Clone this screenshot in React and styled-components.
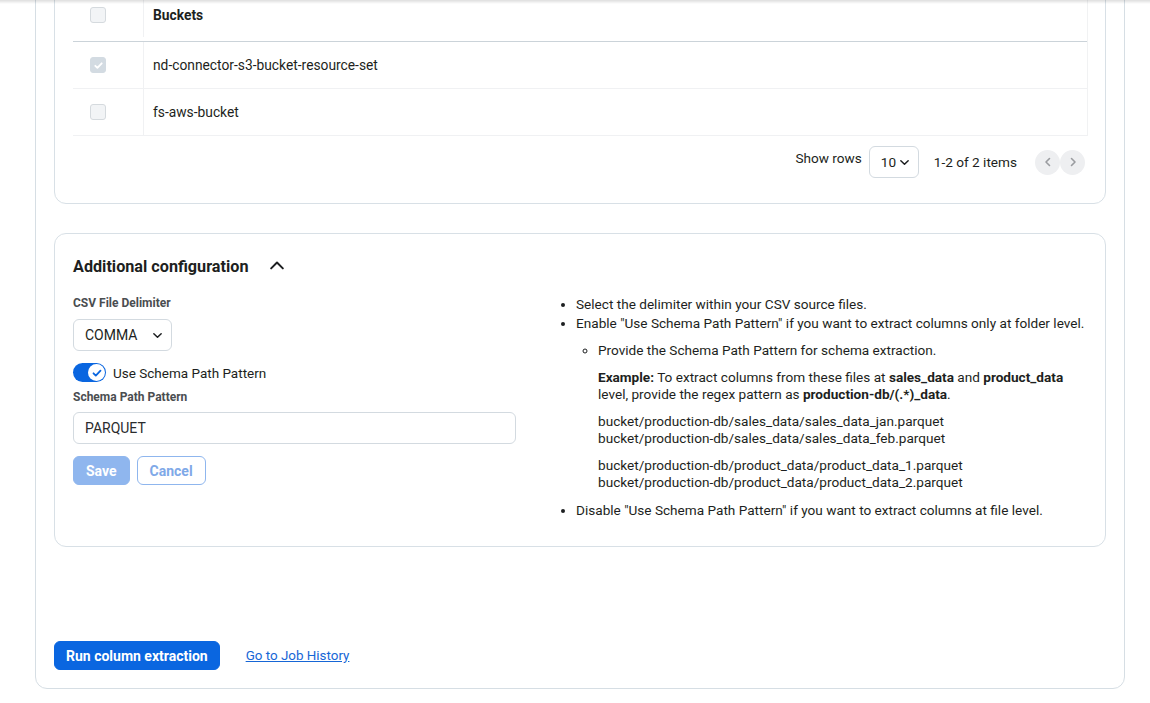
import React from "react";
import styled, { createGlobalStyle } from "styled-components";

const Global = createGlobalStyle`
  html, body { margin: 0; padding: 0; background: #fff; }
  body { font-family: Roboto, "Liberation Sans", Arial, sans-serif; color: #1d1f21; overflow: hidden; }
  * { box-sizing: border-box; }
`;

const TopShadow = styled.div`
  position: fixed;
  top: 0; left: 0; right: 0;
  height: 4px;
  background: linear-gradient(rgba(0,0,0,0.13), rgba(0,0,0,0));
  z-index: 5;
`;

const Page = styled.div`
  height: 703px;
  overflow: hidden;
  padding: 0 25px 0 35px;
`;

const OuterCard = styled.div`
  margin-top: -45px;
  border: 1px solid #d6dee4;
  border-radius: 12px;
  padding: 18px;
  display: flex;
  flex-direction: column;
`;

const Card = styled.section`
  border: 1px solid #d8e0e6;
  border-radius: 12px;
  padding: ${p => p.$pad || "18px"};
  margin-bottom: ${p => p.$mb || "0"};
`;

const Table = styled.div`
  display: flex;
  flex-direction: column;
  border-right: 1px solid #f1f2f3;
`;

const Row = styled.div`
  display: grid;
  grid-template-columns: 71px 1fr;
  height: ${p => (p.$head ? "49px" : "47px")};
  padding-bottom: ${p => (p.$head ? "4px" : "0")};
  border-bottom: 1px solid ${p => (p.$head ? "#cbd3d9" : "#f0f1f3")};
`;

const CheckCell = styled.div`
  display: flex;
  align-items: center;
  padding-left: 17px;
  border-right: 1px solid #f0f1f3;
`;

const TextCell = styled.div`
  display: flex;
  align-items: center;
  padding-left: 9px;
  font-size: 13.8px;
  font-weight: ${p => (p.$head ? 700 : 400)};
  color: #1d1f21;
`;

const Box = styled.span`
  width: 16px;
  height: 16px;
  border-radius: 3px;
  border: 1.5px solid ${p => (p.$checked ? "#d3dbe2" : "#d5dade")};
  background: ${p => (p.$checked ? "#d3dbe2" : "#f2f4f6")};
  display: flex;
  align-items: center;
  justify-content: center;
`;

const Pager = styled.div`
  display: flex;
  justify-content: flex-end;
  align-items: center;
  margin-top: 10px;
  margin-right: 3px;
  font-size: 13.6px;
  color: #1d1f21;
`;

const PagerLabel = styled.span`
  margin-right: 7px;
  margin-top: -8px;
`;

const SelectBox = styled.div`
  display: flex;
  align-items: center;
  justify-content: space-between;
  height: 32px;
  width: ${p => p.$w};
  padding: 0 8px 0 ${p => p.$pl || "11px"};
  border: 1px solid #d3dae0;
  border-radius: 6px;
  font-size: ${p => p.$fs || "13.6px"};
  color: #1d1f21;
  background: #fff;
`;

const PageInfo = styled.span`
  margin-left: 15px;
  margin-right: 18px;
`;

const RoundBtn = styled.span`
  width: 25px;
  height: 25px;
  border-radius: 50%;
  background: #eeeff1;
  display: flex;
  align-items: center;
  justify-content: center;
`;

const CardHead = styled.div`
  display: flex;
  align-items: center;
  gap: 22px;
  height: 22px;
  font-size: 16.2px;
  font-weight: 700;
  color: #1d1f21;
`;

const ConfigGrid = styled.div`
  display: grid;
  grid-template-columns: 475px 1fr;
  margin-top: 19px;
`;

const LeftCol = styled.div`
  display: flex;
  flex-direction: column;
  align-items: flex-start;
`;

const FieldLabel = styled.div`
  font-size: 12px;
  font-weight: 700;
  color: #4a4d50;
  line-height: 14px;
  margin-bottom: ${p => p.$mb || "8px"};
`;

const ToggleRow = styled.label`
  display: flex;
  align-items: center;
  gap: 7px;
  margin: 12px 0 8px;
  font-size: 13.5px;
  color: #1d1f21;
`;

const Toggle = styled.span`
  position: relative;
  width: 33px;
  height: 19px;
  border-radius: 10px;
  background: #0a66e0;
`;

const Knob = styled.span`
  position: absolute;
  right: 1px;
  top: 1px;
  width: 17px;
  height: 17px;
  border-radius: 50%;
  background: #fff;
  display: flex;
  align-items: center;
  justify-content: center;
`;

const TextInput = styled.div`
  width: 443px;
  height: 32px;
  border: 1px solid #d3dae0;
  border-radius: 6px;
  display: flex;
  align-items: center;
  padding-left: 11px;
  font-size: 14px;
  color: #2a2c2e;
`;

const BtnRow = styled.div`
  display: flex;
  gap: 7px;
  margin-top: 12px;
`;

const Button = styled.button`
  font-family: inherit;
  height: 29px;
  padding: 0 ${p => p.$px || "12px"};
  border-radius: 6px;
  font-size: 14px;
  font-weight: 700;
  cursor: pointer;
  border: 1px solid ${p => (p.$variant === "outline" || p.$variant === "disabled" ? "#8fb6ee" : "#0a66e0")};
  background: ${p => (p.$variant === "outline" ? "#fff" : p.$variant === "disabled" ? "#8fb6ee" : "#0a66e0")};
  color: ${p => (p.$variant === "outline" ? "#7fa9e8" : "#fff")};
`;

const HelpList = styled.ul`
  margin: 0;
  padding-left: 28px;
  font-size: 13.6px;
  line-height: 17px;
  color: #1d1f21;
  & > li { margin-bottom: 2px; }
  & > li:last-child { margin-top: 11px; }
`;

const SubList = styled.ul`
  list-style: circle;
  margin: 10px 0 0;
  padding-left: 22px;
`;

const Para = styled.p`
  margin: 10px 0 0;
`;

const Footer = styled.div`
  display: flex;
  align-items: center;
  gap: 26px;
  margin-top: 94px;
`;

const Link = styled.a`
  color: #1666d6;
  font-size: 13.4px;
  text-decoration: underline;
`;

const Chevron = ({ dir = "down", size = 10, color = "#1d1f21", w = 1.6 }) => {
  const d = {
    down: "M2 4l4 4 4-4",
    up: "M1 8l5-5 5 5",
    left: "M7.5 2.5L4 6l3.5 3.5",
    right: "M4.5 2.5L8 6l-3.5 3.5",
  }[dir];
  return (
    <svg width={size} height={size} viewBox="0 0 12 12" fill="none">
      <path d={d} stroke={color} strokeWidth={w} strokeLinecap="round" strokeLinejoin="round" />
    </svg>
  );
};

const Check = ({ color = "#fff", size = 12, w = 2 }) => (
  <svg width={size} height={size} viewBox="0 0 12 12" fill="none">
    <path d="M2.5 6.3l2.3 2.3 4.7-5" stroke={color} strokeWidth={w} strokeLinecap="round" strokeLinejoin="round" />
  </svg>
);

const buckets = [
  { name: "nd-connector-s3-bucket-resource-set", checked: true },
  { name: "fs-aws-bucket", checked: false },
];

export default function App() {
  return (
    <>
      <Global />
      <TopShadow />
      <Page>
        <OuterCard>
          <Card $pad="18px 17px 25px 18px" $mb="29px">
            <Table>
              <Row $head>
                <CheckCell><Box /></CheckCell>
                <TextCell $head>Buckets</TextCell>
              </Row>
              {buckets.map(b => (
                <Row key={b.name}>
                  <CheckCell>
                    <Box $checked={b.checked}>{b.checked && <Check size={11} />}</Box>
                  </CheckCell>
                  <TextCell>{b.name}</TextCell>
                </Row>
              ))}
            </Table>
            <Pager>
              <PagerLabel>Show rows</PagerLabel>
              <SelectBox $w="50px" $pl="11px">10 <Chevron dir="down" size={11} /></SelectBox>
              <PageInfo>1-2 of 2 items</PageInfo>
              <RoundBtn><Chevron dir="left" size={12} color="#9a9ca0" /></RoundBtn>
              <RoundBtn><Chevron dir="right" size={12} color="#9a9ca0" /></RoundBtn>
            </Pager>
          </Card>

          <Card $pad="21px 18px 25px 18px">
            <CardHead>
              Additional configuration
              <Chevron dir="up" size={14} w={1.7} />
            </CardHead>
            <ConfigGrid>
              <LeftCol>
                <FieldLabel $mb="9px">CSV File Delimiter</FieldLabel>
                <SelectBox $w="99px" $fs="14px">COMMA <Chevron dir="down" size={11} /></SelectBox>
                <ToggleRow>
                  <Toggle>
                    <Knob><Check color="#0a66e0" size={12} w={1.8} /></Knob>
                  </Toggle>
                  Use Schema Path Pattern
                </ToggleRow>
                <FieldLabel>Schema Path Pattern</FieldLabel>
                <TextInput>PARQUET</TextInput>
                <BtnRow>
                  <Button $variant="disabled" $px="12px">Save</Button>
                  <Button $variant="outline" $px="12px">Cancel</Button>
                </BtnRow>
              </LeftCol>
              <HelpList>
                <li>Select the delimiter within your CSV source files.</li>
                <li>
                  Enable "Use Schema Path Pattern" if you want to extract columns only at folder level.
                  <SubList>
                    <li>
                      Provide the Schema Path Pattern for schema extraction.
                      <Para>
                        <b>Example:</b> To extract columns from these files at <b>sales_data</b> and{" "}
                        <b>product_data</b> level, provide the regex pattern as <b>production-db/(.*)_data</b>.
                      </Para>
                      <Para>
                        bucket/production-db/sales_data/sales_data_jan.parquet
                        <br />
                        bucket/production-db/sales_data/sales_data_feb.parquet
                      </Para>
                      <Para>
                        bucket/production-db/product_data/product_data_1.parquet
                        <br />
                        bucket/production-db/product_data/product_data_2.parquet
                      </Para>
                    </li>
                  </SubList>
                </li>
                <li>Disable "Use Schema Path Pattern" if you want to extract columns at file level.</li>
              </HelpList>
            </ConfigGrid>
          </Card>

          <Footer>
            <Button $px="11px">Run column extraction</Button>
            <Link href="#">Go to Job History</Link>
          </Footer>
        </OuterCard>
      </Page>
    </>
  );
}
